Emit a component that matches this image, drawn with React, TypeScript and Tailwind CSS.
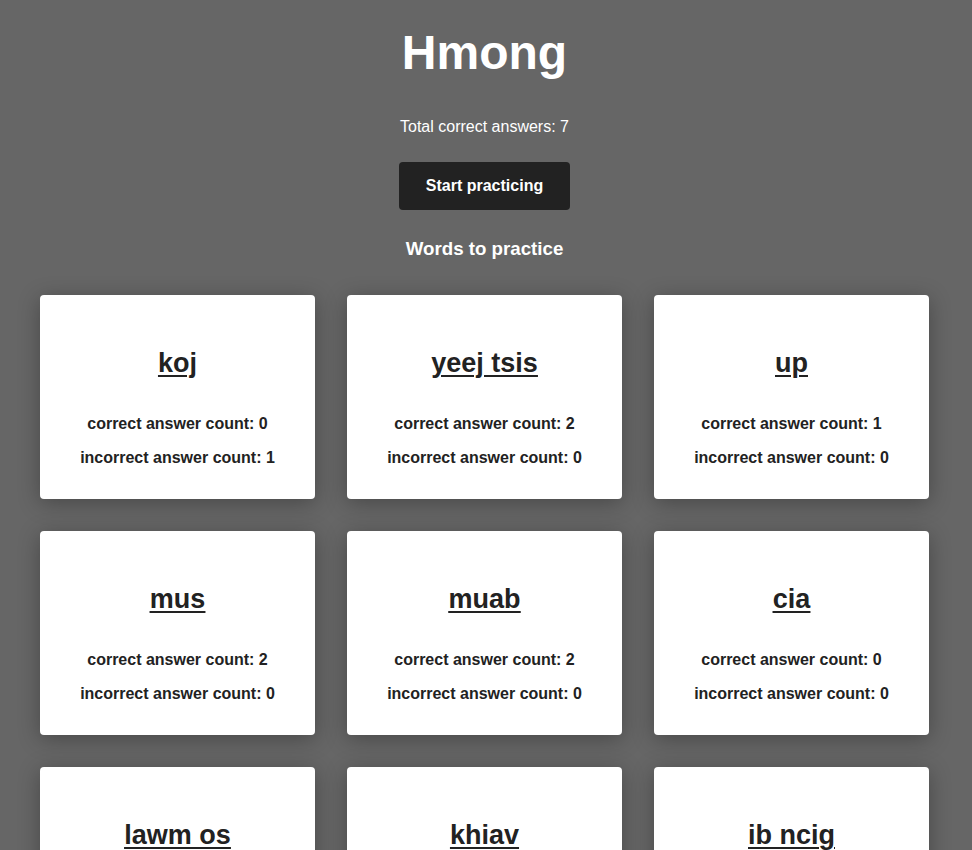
const words = [
	{word: 'koj', correct: 0, incorrect: 1},
	{word: 'yeej tsis', correct: 2, incorrect: 0},
	{word: 'up', correct: 1, incorrect: 0},
	{word: 'mus', correct: 2, incorrect: 0},
	{word: 'muab', correct: 2, incorrect: 0},
	{word: 'cia', correct: 0, incorrect: 0},
	{word: 'lawm os', correct: 1, incorrect: 0},
	{word: 'khiav', correct: 1, incorrect: 0},
	{word: 'ib ncig', correct: 0, incorrect: 0}
];

function WordCard({word, correct, incorrect}: {word: string; correct: number; incorrect: number}) {
	return (
		<div className="bg-white rounded text-[#222] text-center pt-[53px] pb-[32px] shadow-[0_4px_22px_rgba(0,0,0,0.3)]">
			<h2 className="text-[27px] leading-[31px] font-bold underline underline-offset-[3px] decoration-2">
				<a href="#">{word}</a>
			</h2>
			<p className="mt-9 text-base leading-[18px] font-bold">correct answer count: {correct}</p>
			<p className="mt-4 text-base leading-[18px] font-bold">incorrect answer count: {incorrect}</p>
		</div>
	);
}

export default function App() {
	return (
		<div className="min-h-screen bg-[#666] text-white font-['Liberation_Sans',Arial,sans-serif] pb-10">
			<div className="flex flex-col items-center mr-[3px]">
				<h1 className="mt-[25px] text-5xl leading-[55px] font-bold">Hmong</h1>
				<p className="mt-[38px] text-base leading-[18px]">Total correct answers: 7</p>
				<button className="mt-[26px] h-12 w-[171px] rounded bg-[#222] text-base font-bold text-white">
					Start practicing
				</button>
				<h3 className="mt-[28px] text-[18.72px] leading-[22px] font-bold">Words to practice</h3>
			</div>
			<div className="mt-[35px] pl-10 grid grid-cols-[repeat(3,275px)] gap-x-8 gap-y-[32px]">
				{words.map(w => (
					<WordCard key={w.word} {...w}/>
				))}
			</div>
		</div>
	);
}
